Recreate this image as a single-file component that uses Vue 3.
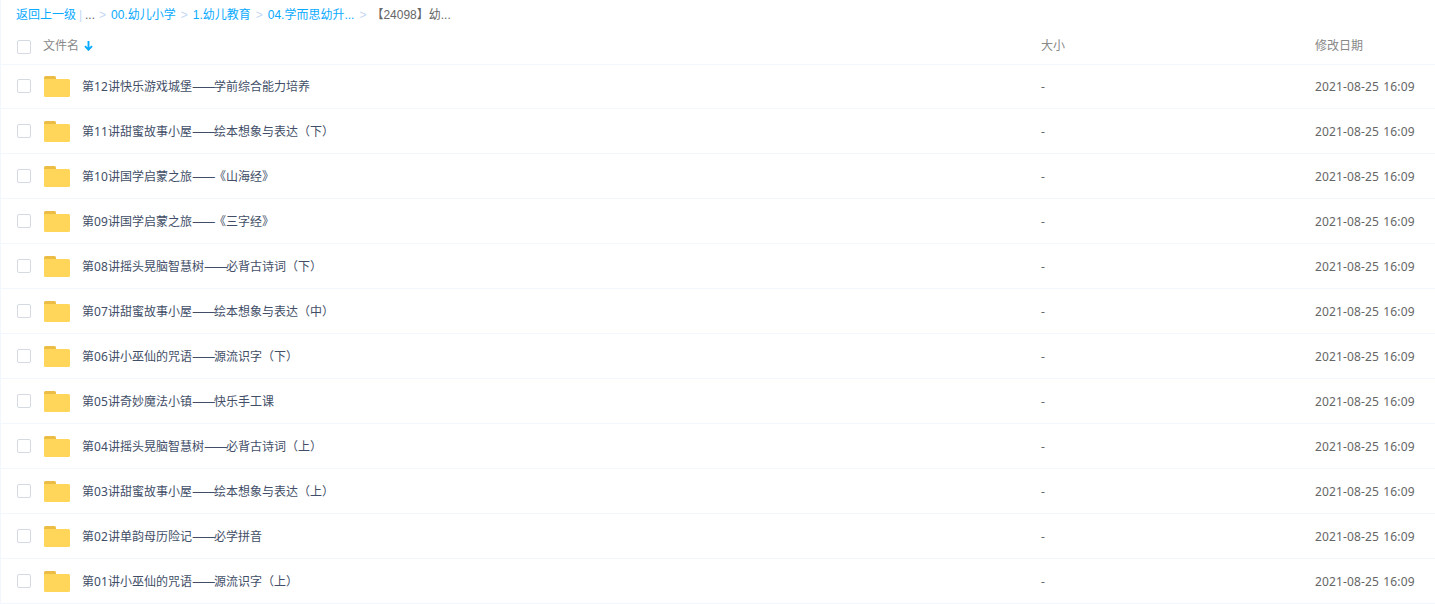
<script setup>
    import { ref } from 'vue';

    // 面包屑导航
    const crumbs = ['00.幼儿小学', '1.幼儿教育', '04.学而思幼升...']

    const date = '2021-08-25 16:09'
    // 文件夹名称由三部分组成：序号、课程、主题
    const files = ref([
        { no: '12', course: '快乐游戏城堡', topic: '学前综合能力培养' },
        { no: '11', course: '甜蜜故事小屋', topic: '绘本想象与表达（下）' },
        { no: '10', course: '国学启蒙之旅', topic: '《山海经》' },
        { no: '09', course: '国学启蒙之旅', topic: '《三字经》' },
        { no: '08', course: '摇头晃脑智慧树', topic: '必背古诗词（下）' },
        { no: '07', course: '甜蜜故事小屋', topic: '绘本想象与表达（中）' },
        { no: '06', course: '小巫仙的咒语', topic: '源流识字（下）' },
        { no: '05', course: '奇妙魔法小镇', topic: '快乐手工课' },
        { no: '04', course: '摇头晃脑智慧树', topic: '必背古诗词（上）' },
        { no: '03', course: '甜蜜故事小屋', topic: '绘本想象与表达（上）' },
        { no: '02', course: '单韵母历险记', topic: '必学拼音' },
        { no: '01', course: '小巫仙的咒语', topic: '源流识字（上）' }
    ])
</script>


<template>
    <div class="page">
        <div class="crumbs">
            <a class="link">返回上一级</a>
            <span class="bar">|</span>
            <span class="more">...</span>
            <template v-for="item in crumbs" :key="item">
                <span class="sep">&gt;</span>
                <a class="link">{{item}}</a>
            </template>
            <span class="sep">&gt;</span>
            <span class="current">【24098】幼...</span>
        </div>

        <div class="row head">
            <span class="check"></span>
            <div class="name">
                文件名
                <svg class="arrow" width="9" height="10" viewBox="0 0 9 10">
                    <path d="M4.5 0V8.6M1 5.2L4.5 8.8L8 5.2" fill="none" stroke="#09aaff" stroke-width="1.9"/>
                </svg>
            </div>
            <div class="size">大小</div>
            <div class="time">修改日期</div>
        </div>

        <div v-for="item in files" :key="item.no" class="row item">
            <span class="check"></span>
            <svg class="folder" width="26" height="21" viewBox="0 0 26 21">
                <path d="M0 6V1.5Q0 0 1.5 0H10.5Q12 0 12 1.5V6Z" fill="#ecbd45"/>
                <path d="M0 3H24.5Q26 3 26 4.5V19.5Q26 21 24.5 21H1.5Q0 21 0 19.5Z" fill="#ffd65a"/>
            </svg>
            <div class="name">第<span class="num">{{item.no}}</span>讲{{item.course}}<span class="dash">——</span>{{item.topic}}</div>
            <div class="size">-</div>
            <div class="time">{{date}}</div>
        </div>
    </div>
</template>


<style>
    body{
        background: #fff;
        overflow: hidden;
    }
</style>

<style scoped>
    .page{
        height: 604px;
        box-sizing: border-box;
        border-left: 1px solid #f2f6fd;
        font-family: "Liberation Sans", "Noto Sans CJK SC", sans-serif;
        font-size: 12px;
        color: #424e67;
        white-space: nowrap;
    }
    .crumbs{
        display: flex;
        height: 30px;
        line-height: 30px;
        padding-left: 15px;
        color: #666;
    }
    .link{
        color: #09aaff;
    }
    .bar{
        width: 3px;
        margin: 0 3px 0 3px;
        color: #c4d8f4;
    }
    .more{
        width: 9px;
    }
    .sep{
        width: 7px;
        margin: 0 5px;
        color: #c4d8f4;
    }
    .row{
        display: flex;
        align-items: center;
        height: 45px;
        box-sizing: border-box;
        border-bottom: 1px solid #f2f6fd;
        padding-left: 16px;
    }
    .head{
        height: 35px;
        padding-bottom: 6px;
        color: #888;
    }
    .head .check{
        margin-top: 6px;
    }
    .head + .item{
        height: 44px;
        padding-bottom: 1px;
    }
    .check{
        width: 14px;
        height: 14px;
        box-sizing: border-box;
        border: 1px solid #d5dae2;
        border-radius: 2px;
        background: #fff;
    }
    .folder{
        margin-left: 13px;
    }
    .name{
        flex: 1;
        margin-left: 12px;
    }
    .arrow{
        margin-left: 2px;
        vertical-align: -1px;
    }
    .num{
        font-family: "Noto Sans", sans-serif;
        letter-spacing: 0.14px;
    }
    /* 破折号需要连成一条线 */
    .dash{
        display: inline-block;
        width: 22px;
        font-family: "Noto Sans CJK SC", sans-serif;
        font-size: 14px;
        line-height: 12px;
        letter-spacing: -1.5px;
    }
    .size{
        width: 274px;
    }
    .time{
        width: 120px;
    }
    .item .size,
    .item .time{
        font-family: "Noto Sans", sans-serif;
        color: #666;
    }
    .item .time{
        letter-spacing: 0.14px;
        word-spacing: 1px;
    }
</style>
